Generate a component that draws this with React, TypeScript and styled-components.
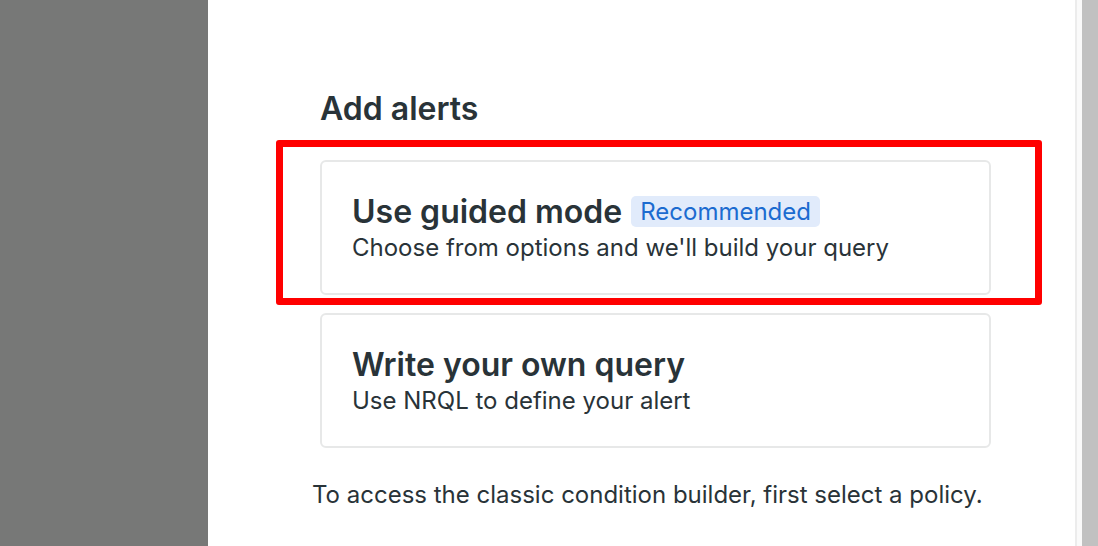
import styled, { createGlobalStyle } from 'styled-components';

const GlobalStyle = createGlobalStyle`
  html, body {
    margin: 0;
    padding: 0;
    width: 1098px;
    height: 546px;
    overflow: hidden;
    font-family: Inter, "Noto Sans", sans-serif;
    color: #293338;
  }
`;

const Screen = styled.div`
  display: flex;
  width: 1098px;
  height: 546px;
`;

const Backdrop = styled.div`
  width: 208px;
  flex-shrink: 0;
  background: #777877;
`;

const Panel = styled.div`
  flex: 1;
  display: flex;
  background: #fff;
`;

const Content = styled.div`
  flex: 1;
  padding: 89px 0 0 112px;
  border-right: 2px solid #ececec;
`;

const Gutter = styled.div`
  width: 5px;
  background: #fafafa;
`;

const Scrollbar = styled.div`
  width: 16px;
  background: #c1c1c1;
`;

const Heading = styled.h2`
  margin: 0 0 31px 0;
  font-size: 32px;
  font-weight: 600;
  line-height: 40px;
`;

const Options = styled.div`
  width: 671px;
  display: flex;
  flex-direction: column;
  gap: 18px;
`;

const Highlighted = styled.div`
  position: relative;
`;

const Marker = styled.div`
  position: absolute;
  left: -44px;
  right: -51px;
  top: -20px;
  bottom: -10px;
  border: 7px solid #ff0000;
  border-radius: 3px;
  pointer-events: none;
`;

const Card = styled.div`
  box-sizing: border-box;
  height: 135px;
  padding: 0 30px;
  border: 2px solid #e7e8e8;
  border-radius: 6px;
  display: flex;
  flex-direction: column;
  justify-content: center;
`;

const TitleRow = styled.div`
  display: flex;
  align-items: center;
  gap: 9px;
`;

const Title = styled.div`
  font-size: 32px;
  font-weight: 600;
  line-height: 40px;
`;

const Badge = styled.span`
  padding: 0 9px;
  background: #e1ebfb;
  color: #1c6bd0;
  border-radius: 5px;
  font-size: 24px;
  line-height: 31px;
`;

const Description = styled.div`
  font-size: 24px;
  line-height: 32px;
`;

const Footnote = styled.p`
  margin: 31px 0 0 -8px;
  font-size: 24px;
  line-height: 32px;
`;

export default function App() {
  return (
    <>
      <GlobalStyle />
      <Screen>
        <Backdrop />
        <Panel>
          <Content>
            <Heading>Add alerts</Heading>
            <Options>
              <Highlighted>
                <Card>
                  <TitleRow>
                    <Title>Use guided mode</Title>
                    <Badge>Recommended</Badge>
                  </TitleRow>
                  <Description>Choose from options and we'll build your query</Description>
                </Card>
                <Marker />
              </Highlighted>
              <Card>
                <Title>Write your own query</Title>
                <Description>Use NRQL to define your alert</Description>
              </Card>
            </Options>
            <Footnote>To access the classic condition builder, first select a policy.</Footnote>
          </Content>
          <Gutter />
          <Scrollbar />
        </Panel>
      </Screen>
    </>
  );
}
